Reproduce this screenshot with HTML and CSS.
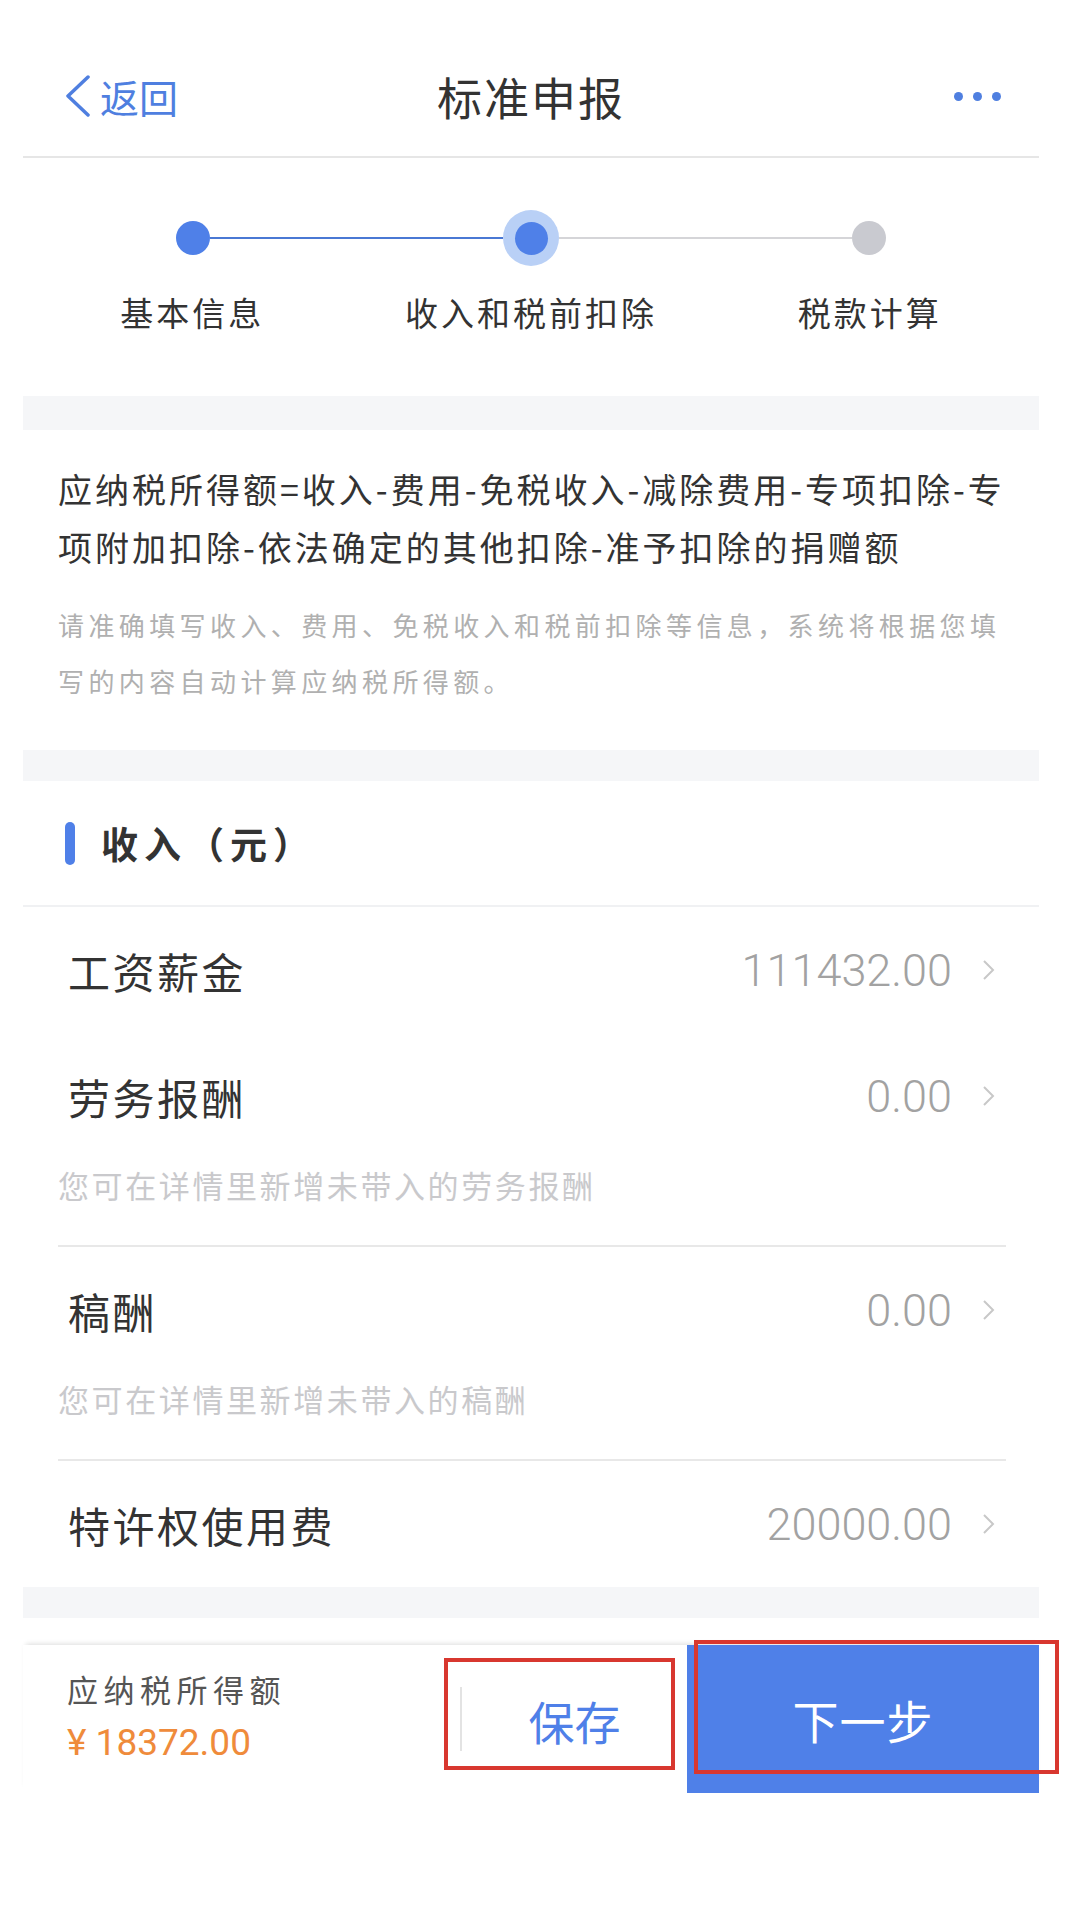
FILE: index.html
```html
<!DOCTYPE html>
<html lang="zh-CN">
<head>
  <meta charset="UTF-8">
  <title>标准申报</title>
  <meta name="viewport" content="width=device-width, initial-scale=1">
  <link rel="stylesheet" href="styles.css">
</head>
<body>
  <div class="app">

    <div class="topbar">
      <a class="back" href="#">
        <svg width="26" height="42" viewBox="0 0 26 42"><polyline points="23,2 3,21 23,40" fill="none" stroke="#4f7fe0" stroke-width="3.5" stroke-linecap="round" stroke-linejoin="round"/></svg>
        <span>返回</span>
      </a>
      <h1>标准申报</h1>
      <div class="more"><i></i><i></i><i></i></div>
    </div>

    <div class="steps">
      <div class="track">
        <span class="dot done"></span>
        <span class="line done"></span>
        <span class="halo"><span class="dot done"></span></span>
        <span class="line"></span>
        <span class="dot"></span>
      </div>
      <div class="labels">
        <span>基本信息</span>
        <span>收入和税前扣除</span>
        <span>税款计算</span>
      </div>
    </div>

    <div class="band"></div>

    <div class="intro">
      <p class="formula">应纳税所得额=收入-费用-免税收入-减除费用-专项扣除-专项附加扣除-依法确定的其他扣除-准予扣除的捐赠额</p>
      <p class="intro-hint">请准确填写收入、费用、免税收入和税前扣除等信息，系统将根据您填写的内容自动计算应纳税所得额。</p>
    </div>

    <div class="band thin"></div>

    <div class="section-head">
      <span class="marker"></span>
      <h2>收入（元）</h2>
    </div>

    <div class="items">
      <div class="item">
        <div class="item-main">
          <span class="item-label">工资薪金</span>
          <span class="item-value">111432.00</span>
          <svg class="item-arrow" width="13" height="22" viewBox="0 0 13 22"><polyline points="2,2 11,11 2,20" fill="none" stroke="#c8c8c8" stroke-width="2"/></svg>
        </div>
      </div>
      <div class="item with-hint">
        <div class="item-main">
          <span class="item-label">劳务报酬</span>
          <span class="item-value">0.00</span>
          <svg class="item-arrow" width="13" height="22" viewBox="0 0 13 22"><polyline points="2,2 11,11 2,20" fill="none" stroke="#c8c8c8" stroke-width="2"/></svg>
        </div>
        <p class="item-hint">您可在详情里新增未带入的劳务报酬</p>
      </div>
      <div class="item with-hint">
        <div class="item-main">
          <span class="item-label">稿酬</span>
          <span class="item-value">0.00</span>
          <svg class="item-arrow" width="13" height="22" viewBox="0 0 13 22"><polyline points="2,2 11,11 2,20" fill="none" stroke="#c8c8c8" stroke-width="2"/></svg>
        </div>
        <p class="item-hint">您可在详情里新增未带入的稿酬</p>
      </div>
      <div class="item">
        <div class="item-main">
          <span class="item-label">特许权使用费</span>
          <span class="item-value">20000.00</span>
          <svg class="item-arrow" width="13" height="22" viewBox="0 0 13 22"><polyline points="2,2 11,11 2,20" fill="none" stroke="#c8c8c8" stroke-width="2"/></svg>
        </div>
      </div>
    </div>

    <div class="band thin"></div>

    <div class="actionbar">
      <div class="total">
        <span class="total-label">应纳税所得额</span>
        <span class="total-amount">¥ 18372.00</span>
      </div>
      <button class="save">保存</button>
      <button class="next">下一步</button>
      <span class="mark mark-save"></span>
      <span class="mark mark-next"></span>
    </div>

  </div>
</body>
</html>
```

FILE: styles.css
```css
body {
  margin: 0;
  background: #fff;
  font-family: "Noto Sans CJK SC", "Noto Sans", sans-serif;
  color: #333;
}
.app {
  width: 1016px;
  margin-left: 23px;
}

/* kop */
.topbar {
  display: grid;
  grid-template-columns: 1fr auto 1fr;
  align-items: center;
  height: 158px;
  box-sizing: border-box;
  padding-top: 36px;
  border-bottom: 2px solid #e6e6e6;
}
.back {
  justify-self: start;
  display: flex;
  align-items: center;
  gap: 9px;
  padding-left: 42px;
  color: #4f7fe0;
  font-size: 39px;
  text-decoration: none;
}
h1 {
  margin: 0;
  font-size: 45px;
  font-weight: 400;
  letter-spacing: 2px;
  line-height: 1;
  color: #333;
}
.more {
  justify-self: end;
  display: flex;
  gap: 10px;
  padding-right: 38px;
}
.more i {
  width: 9px;
  height: 9px;
  border-radius: 50%;
  background: #4f7fe0;
}

/* stappen */
.steps {
  padding: 52px 0 62px;
}
.track {
  display: flex;
  align-items: center;
  padding: 0 153px;
}
.dot {
  flex: none;
  width: 34px;
  height: 34px;
  border-radius: 50%;
  background: #c9cad0;
}
.dot.done {
  background: #4f80e8;
}
.halo {
  flex: none;
  width: 56px;
  height: 56px;
  border-radius: 50%;
  background: #b9d0f6;
  display: flex;
  align-items: center;
  justify-content: center;
}
.halo .dot {
  width: 33px;
  height: 33px;
}
.line {
  flex: 1;
  height: 2px;
  background: #d5d5d8;
}
.line.done {
  background: #4a78d4;
}
.labels {
  display: grid;
  grid-template-columns: repeat(3, 1fr);
  margin-top: 24px;
  font-size: 33px;
  letter-spacing: 3px;
  line-height: 44px;
  text-align: center;
  color: #333;
}

.band {
  height: 34px;
  background: #f5f6f8;
}
.band.thin {
  height: 31px;
}

/* uitleg */
.intro {
  padding: 30px 30px 41px 35px;
}
.formula {
  margin: 0;
  font-size: 34px;
  letter-spacing: 3px;
  line-height: 58px;
  color: #333;
}
.intro-hint {
  margin: 21px 0 0;
  font-size: 26px;
  letter-spacing: 4.4px;
  line-height: 56px;
  color: #b0b0b0;
}

/* inkomen */
.section-head {
  display: flex;
  align-items: center;
  height: 124px;
  padding-left: 42px;
  border-bottom: 2px solid #f0f1f3;
}
.marker {
  width: 10px;
  height: 43px;
  border-radius: 5px;
  background: #4f80e8;
  margin-right: 26px;
}
.section-head h2 {
  margin: 0;
  font-size: 37px;
  font-weight: 700;
  letter-spacing: 6px;
  color: #333;
}
.items {
  margin: 0 33px 0 35px;
}
.item.with-hint {
  border-bottom: 2px solid #e8e8e8;
  padding-bottom: 34px;
}
.item-main {
  display: flex;
  align-items: center;
  height: 126px;
  padding: 0 11px 0 10px;
}
.item-label {
  flex: 1;
  font-size: 42px;
  letter-spacing: 2.5px;
  color: #333;
}
.item-value {
  font-family: Roboto, "Liberation Sans", sans-serif;
  font-weight: 300;
  font-size: 45px;
  color: #a2a2a2;
}
.item-arrow {
  margin-left: 30px;
}
.item-hint {
  margin: 0;
  font-size: 31px;
  letter-spacing: 2.6px;
  line-height: 52px;
  color: #c9c9cc;
}

/* onderbalk */
.actionbar {
  position: relative;
  display: flex;
  height: 148px;
  margin-top: 27px;
  box-shadow: 0 -4px 5px -3px rgba(0,0,0,0.14);
}
.total {
  flex: 1;
  display: flex;
  flex-direction: column;
  justify-content: center;
  padding-left: 44px;
  padding-bottom: 6px;
}
.total-label {
  font-size: 31px;
  letter-spacing: 5.5px;
  line-height: 54px;
  color: #555;
}
.total-amount {
  font-family: Roboto, "Liberation Sans", sans-serif;
  font-size: 37px;
  line-height: 54px;
  color: #ef8b3b;
}
button {
  font-family: inherit;
  border: none;
  padding: 0;
  cursor: pointer;
}
.save {
  width: 227px;
  height: 64px;
  align-self: center;
  background: none;
  border-left: 2px solid #e3e3e3;
  font-size: 46px;
  color: #4f80e8;
}
.next {
  width: 352px;
  background: #4f80e8;
  color: #fff;
  font-size: 46px;
  letter-spacing: 1px;
}
.mark {
  position: absolute;
  box-sizing: border-box;
  border: 4px solid #d8372f;
  pointer-events: none;
}
.mark-save {
  left: 421px;
  top: 13px;
  width: 231px;
  height: 112px;
}
.mark-next {
  left: 671px;
  top: -5px;
  width: 365px;
  height: 134px;
}
```
